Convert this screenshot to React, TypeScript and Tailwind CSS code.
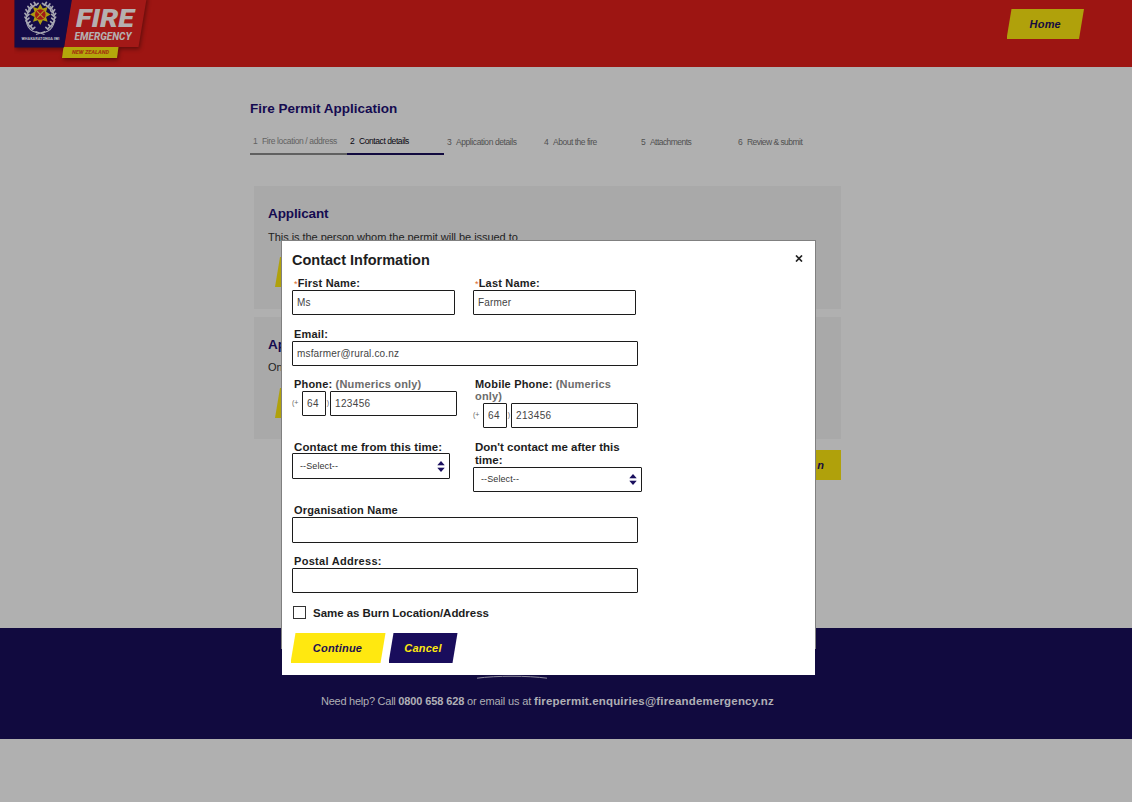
import React from 'react';

const steps = [
  { n: '1', label: 'Fire location / address', item: 'pt-[15px] text-[#626262] border-[#606060] tracking-[-0.38px]' },
  { n: '2', label: 'Contact details', item: 'pt-[15px] text-[#08060f] border-[#110a3f] tracking-[-0.42px]' },
  { n: '3', label: 'Application details', item: 'pt-4 text-[#505050] border-transparent tracking-[-0.42px]' },
  { n: '4', label: 'About the fire', item: 'pt-4 text-[#505050] border-transparent tracking-[-0.48px]' },
  { n: '5', label: 'Attachments', item: 'pt-4 text-[#505050] border-transparent tracking-[-0.55px]' },
  { n: '6', label: 'Review & submit', item: 'pt-4 text-[#505050] border-transparent tracking-[-0.54px]' },
];

function Logo() {
  const leaves = [-162, -146, -130, -114, -98, -82, -66, -50, -34];
  return (
    <svg className="ml-[14px] block" width="140" height="67" viewBox="14 0 140 67">
      <defs>
        <filter id="shade" x="-20%" y="-20%" width="150%" height="150%" colorInterpolationFilters="sRGB">
          <feDropShadow dx="1" dy="2" stdDeviation="2.2" floodColor="#000" floodOpacity="0.4" />
        </filter>
      </defs>
      <g filter="url(#shade)">
        <path d="M63.500 47H118.500L117 58H62z" fill="#b4a70b" />
        <path d="M72 -4h75l-8.500 51H64z" fill="#a31917" />
        <path d="M14.500 -4H72.500L64 47.500H14.500z" fill="#140b47" />
      </g>
      <g stroke="#a7a7b2" fill="none">
        <path d="M39 33C29 32 24.500 24 27 15c.8-4 2-7 4.500-9M41.500 33c10-1 14.500-9 12.500-18-.8-4-2-7-4.500-9" strokeWidth="1.200" />
        {leaves.map((a) => {
          const r = ((a + 90) * Math.PI) / 180;
          const y = 18 + Math.sin(r) * 13.5;
          const d = Math.abs(Math.cos(r) * 13.5);
          return (
            <g key={a} strokeWidth="1.700" strokeLinecap="round">
              <path d={`M${40.3 - d} ${y}l-2 -2.800M${40.3 - d} ${y}l2 -1.800`} />
              <path d={`M${40.3 + d} ${y}l2 -2.800M${40.3 + d} ${y}l-2 -1.800`} />
            </g>
          );
        })}
        <path d="M36 34.500l9-3M44.500 34.500l-9-3" strokeWidth="1.300" />
      </g>
      <path
        d="M40.300 4l2.500 4.500 4.800-1.600-1.500 4.800 4.500 2.800-4.500 2.500 1.500 4.800-4.800-1.500-2.500 4.700-2.500-4.700-4.800 1.500 1.500-4.800-4.500-2.500 4.500-2.800-1.500-4.800 4.800 1.600z"
        fill="#ac9a12"
      />
      <circle cx="40.300" cy="14.500" r="5.300" fill="#a31917" />
      <path d="M37 11.200l6.600 6.600M43.600 11.200l-6.600 6.600" stroke="#b49a20" strokeWidth="1.100" />
      <g fontFamily="Roboto, sans-serif" fontWeight="900">
        <text x="21.500" y="39.500" fontSize="4.200" textLength="38" lengthAdjust="spacingAndGlyphs" fill="#b0b0b8">WHAKARATONGA IWI</text>
        <g fill="#b5b0b0" fontStyle="italic">
          <text x="76" y="27.300" fontSize="26" textLength="58" lengthAdjust="spacingAndGlyphs">FIRE</text>
          <text x="74.500" y="39.700" fontSize="10.500" fontWeight="800" textLength="57" lengthAdjust="spacingAndGlyphs">EMERGENCY</text>
        </g>
        <text x="72" y="54.400" fontSize="5.400" fontStyle="italic" textLength="37" lengthAdjust="spacingAndGlyphs" fill="#a33a10">NEW ZEALAND</text>
      </g>
    </svg>
  );
}

function Slanted({ children, className }: { children: React.ReactNode; className: string }) {
  return (
    <button
      className={`flex h-[30px] items-center justify-center text-[11px] leading-none font-bold italic [clip-path:polygon(5px_0,100%_0,calc(100%-5px)_100%,0_100%)] ${className}`}
    >
      {children}
    </button>
  );
}

function Label({ children, required, className = 'text-[11px] leading-3 tracking-[0.18px]' }: { children: React.ReactNode; required?: boolean; className?: string }) {
  return (
    <label className={`block pl-0.5 font-bold text-[#1d1d1d] ${className}`}>
      {required && <span className="text-[9px] font-normal text-[#d9691e]">*</span>}
      {children}
    </label>
  );
}

function Field({ value = '', className }: { value?: string; className: string }) {
  return (
    <input
      readOnly
      value={value}
      className={`block rounded-[1px] border border-[#1c1c1c] bg-white px-1 text-[10px] text-[#444] outline-none ${className}`}
    />
  );
}

function PhoneRow({ value }: { value: string }) {
  return (
    <div className="mt-px flex text-[7px] leading-[23px] text-[#666]">
      <span className="w-2.5">(+</span>
      <Field value="64" className="h-[25px] w-6 tracking-[0.35px]" />
      <span className="w-1 text-center">)</span>
      <Field value={value} className="h-[25px] w-[127px] tracking-[0.35px]" />
    </div>
  );
}

function TimeSelect({ className }: { className: string }) {
  return (
    <div className={`flex items-center justify-between rounded-[1px] border border-[#1c1c1c] pr-1 pl-[7px] text-[9px] tracking-[0.1px] text-[#333] ${className}`}>
      <span>--Select--</span>
      <svg width="8" height="11" viewBox="0 0 8 11" fill="#1a0f5e">
        <path d="M4 0l3.500 4H.5zM4 11L.5 7h7z" />
        <path d="M.5 4h7v.7h-7zM.5 6.300h7v.7h-7z" opacity="0.4" />
      </svg>
    </div>
  );
}

function ContactDialog() {
  return (
    <div role="dialog" className="absolute top-[240px] left-[281px] h-[409px] w-[535px] border border-b-0 border-[#808080] bg-white">
      <div className="h-[434px] bg-white pt-3 pl-2.5">
        <div className="flex h-6 justify-between pr-3">
          <h2 className="text-[14.5px] leading-[15px] font-bold whitespace-nowrap text-[#1d1d1d]">Contact Information</h2>
          <button className="flex h-2.5 w-2 items-center justify-center" aria-label="Close">
            <svg width="8" height="7" viewBox="0 0 8 7" stroke="#222" strokeWidth="1.700"><path d="M1 .5l6 6M7 .5l-6 6" /></svg>
          </button>
        </div>
        <div className="flex h-[51px]">
          <div className="w-[181px]"><Label required>First Name:</Label><Field value="Ms" className="h-[25px] w-[163px] tracking-[0.15px]" /></div>
          <div><Label required>Last Name:</Label><Field value="Farmer" className="h-[25px] w-[163px] tracking-[0.15px]" /></div>
        </div>
        <div className="h-[50px]"><Label>Email:</Label><Field value="msfarmer@rural.co.nz" className="mt-px h-[25px] w-[346px] tracking-[0.15px]" /></div>
        <div className="flex h-[63px]">
          <div className="w-[181px]">
            <Label>Phone: <span className="text-[#6c6c6c]">(Numerics only)</span></Label>
            <PhoneRow value="123456" />
          </div>
          <div className="w-[165px]">
            <Label>Mobile Phone: <span className="text-[#6c6c6c]">(Numerics<br />only)</span></Label>
            <PhoneRow value="213456" />
          </div>
        </div>
        <div className="flex h-[63px]">
          <div className="w-[181px] whitespace-nowrap"><Label className="text-[11.5px] leading-3 tracking-[0.1px]">Contact me from this time:</Label><TimeSelect className="h-[26px] w-[158px] pt-px" /></div>
          <div className="w-[169px] whitespace-nowrap"><Label className="text-[11.5px] leading-[13px]">Don't contact me after this<br />time:</Label><TimeSelect className="h-[25px] w-[169px]" /></div>
        </div>
        <div className="h-[51px]"><Label>Organisation Name</Label><Field className="mt-px h-[26px] w-[346px]" /></div>
        <div className="h-[51px]"><Label className="text-[11px] leading-3 tracking-[0.3px]">Postal Address:</Label><Field className="mt-px h-[25px] w-[346px]" /></div>
        <div className="flex h-[27px] items-start pl-px">
          <span className="h-[13px] w-[13px] border border-[#333]" />
          <span className="ml-1.5 pl-px text-[11.5px] leading-[14px] font-bold tracking-[-0.04px] text-[#1d1d1d]">Same as Burn Location/Address</span>
        </div>
        <div className="-ml-[1.5px] flex gap-[3px]">
          <Slanted className="w-[95px] bg-[#ffe810] pr-px tracking-[0.2px] text-[#1d1050]">Continue</Slanted>
          <Slanted className="w-[69px] bg-[#190d5c] tracking-[0.2px] text-[#ffe810]">Cancel</Slanted>
        </div>
      </div>
    </div>
  );
}

export default function App() {
  return (
    <div className="relative flex h-[802px] w-[1132px] flex-col overflow-hidden bg-[#b0b0b0] font-['Liberation_Sans',Arial,sans-serif]">
      <header className="flex h-[67px] shrink-0 justify-between bg-[#9d1512]">
        <Logo />
        <Slanted className="mt-[9px] mr-12 w-[77.5px] bg-[#b0a10b] tracking-[0.2px] text-[#150b40]">Home</Slanted>
      </header>
      <main className="h-[561px] shrink-0 pt-[34px] pl-[250px]">
        <h1 className="h-[30px] text-[13.5px] leading-4 font-bold text-[#150b50]">Fire Permit Application</h1>
        <ol className="flex h-6">
          {steps.map((s) => (
            <li key={s.n} className={`-mt-[10px] flex h-[34px] w-[97px] border-b-2 pl-[3px] text-[8.5px] leading-[10px] whitespace-nowrap ${s.item}`}>
              <span className="w-[9px]">{s.n}</span>
              <span>{s.label}</span>
            </li>
          ))}
        </ol>
        <section className="mt-[31px] ml-1 h-[123px] w-[587px] bg-[#a9a9a9] pt-5 pl-3.5">
          <h2 className="text-[13.5px] leading-4 font-bold tracking-[-0.12px] text-[#150b50]">Applicant</h2>
          <p className="mt-[9px] text-[11px] leading-3 tracking-[-0.04px] text-[#222]">This is the person whom the permit will be issued to</p>
          <Slanted className="mt-[14px] ml-[7px] w-24 bg-[#b0a10b]">{null}</Slanted>
        </section>
        <section className="mt-2 ml-1 h-[122px] w-[587px] bg-[#a9a9a9] pt-5 pl-3.5">
          <h2 className="text-[13.5px] leading-4 font-bold tracking-[-0.12px] text-[#150b50]">Ap</h2>
          <p className="mt-2 text-[11px] leading-3 text-[#222]">On</p>
          <Slanted className="mt-[15px] ml-[7px] w-24 bg-[#b0a10b]">{null}</Slanted>
        </section>
        <button className="mt-[11px] ml-[491px] flex h-[30px] w-[100px] items-center justify-end bg-[#b0a10b] pr-[17px] text-[11px] font-bold text-[#150b40] italic">n</button>
      </main>
      <footer className="h-[111px] shrink-0 bg-[#110a3f] pt-[47px]">
        <svg className="ml-[476px] block" width="72" height="4" viewBox="0 0 72 4"><path d="M1 3.200C20 .6 52 .6 71 3.200" fill="none" stroke="#8f8c9e" /></svg>
        <p className="mt-4 ml-[321px] text-[11px] leading-3 whitespace-nowrap text-[#afafb5]">
          <span className="tracking-[-0.25px]">Need help? Call </span>
          <b className="tracking-[-0.12px]">0800 658 628</b>
          <span className="tracking-[-0.15px]"> or email us at </span>
          <b className="text-[11.5px] tracking-[0.18px]">firepermit.enquiries@fireandemergency.nz</b>
        </p>
      </footer>
      <ContactDialog />
    </div>
  );
}
